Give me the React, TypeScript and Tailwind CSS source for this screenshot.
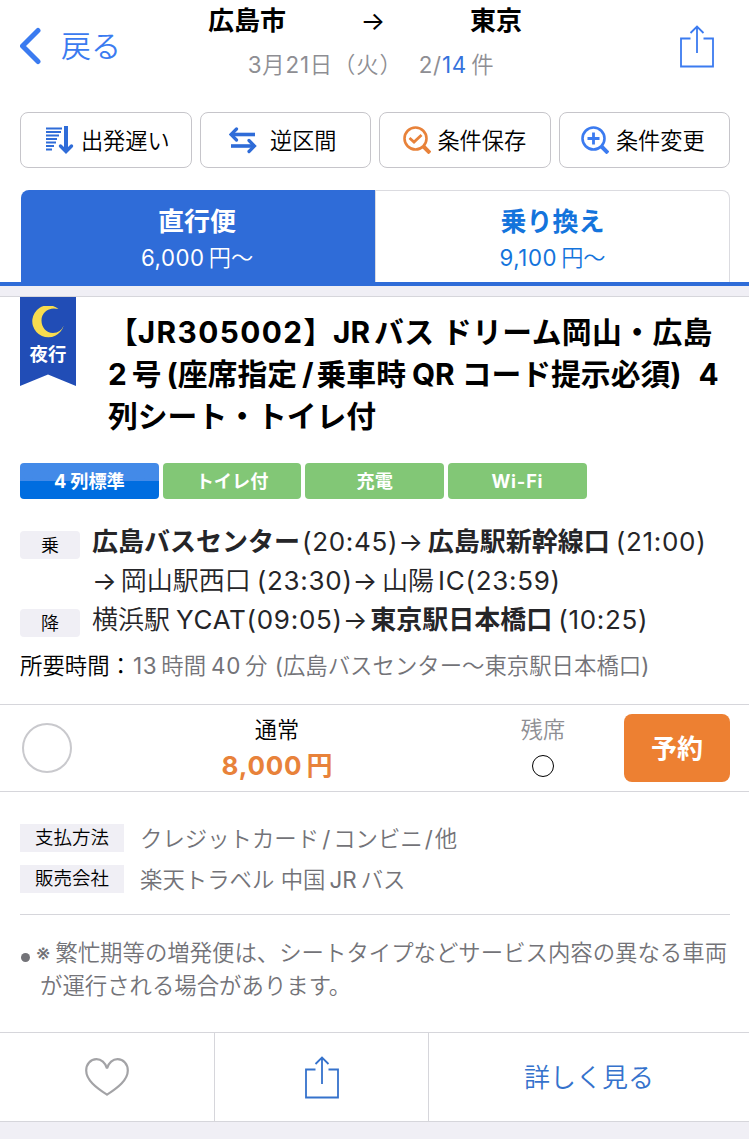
import type { ReactNode } from "react"

function ShareIcon({ className }: { className?: string }) {
  return (
    <svg width="36" height="43" viewBox="0 0 36 43" fill="none" stroke="currentColor" strokeWidth="1.8" className={className}>
      <path d="M11.5 13.5H2v28h32v-28h-9.5" />
      <path d="M18 28V2M11.5 8 18 1.5 24.5 8" />
    </svg>
  )
}

function SortIcon() {
  return (
    <svg width="29" height="28" viewBox="0 0 29 28" fill="none" stroke="#2f6cd8">
      <path strokeWidth="1.8" d="M1 2.500h16M1 6h15M1 9.500h13M1 13h11M1 16.500h10M1 20h8M1 23.500h6" />
      <path strokeWidth="4" d="M21 0v25" />
      <path strokeWidth="3.4" strokeLinecap="round" d="m15.500 20 5.500 5.500L26.500 20" />
    </svg>
  )
}

function SwapIcon() {
  return (
    <svg width="28" height="28" viewBox="0 0 28 28" fill="none" stroke="#2f6cd8" strokeWidth="3.6">
      <path d="M2 8.500h24" />
      <path strokeWidth="3.2" strokeLinecap="round" d="m7.500 3-5.500 5.500 5.500 5.500" />
      <path d="M2 20h24" />
      <path strokeWidth="3.2" strokeLinecap="round" d="M20 14.500 25.500 20 20 25.500" />
    </svg>
  )
}

function SearchIcon({ color, children }: { color: string; children: ReactNode }) {
  return (
    <svg width="28" height="28" viewBox="0 0 28 28" fill="none" stroke={color}>
      <circle cx="12.5" cy="12.5" r="11" strokeWidth="2.6" />
      <path strokeWidth="4" d="m20 20 7 7" />
      {children}
    </svg>
  )
}

function FilterButton({ icon, label, className }: { icon: ReactNode; label: string; className: string }) {
  return (
    <button className={`flex h-14 items-center justify-center rounded-lg border border-[#c6c5ca] bg-white text-[22.2px] text-black ${className}`}>
      {icon}
      <span className="mt-0.5 leading-none">{label}</span>
    </button>
  )
}

function Badge({ children, className }: { children: ReactNode; className: string }) {
  return (
    <span className={`flex h-9 w-[138.7px] items-center justify-center rounded pt-0.5 text-[18.2px] font-bold text-white ${className}`}>
      {children}
    </span>
  )
}

function Price({ amount }: { amount: string }) {
  return (
    <span className="mt-0.5 text-[22.2px] leading-8">
      <span className="tracking-[0.6px]">{amount}</span>
      <span className="ml-1">円〜</span>
    </span>
  )
}

function InfoRow({ label, children }: { label: string; children: ReactNode }) {
  return (
    <div className="flex h-7 items-center">
      <span className="flex h-7 w-[104px] items-center justify-center bg-[#f0eff5] text-[18.5px] text-black">{label}</span>
      <span className="ml-4 mt-0.5 whitespace-nowrap text-[22.4px] text-[#737378]">{children}</span>
    </div>
  )
}

function StopLabel({ children }: { children: ReactNode }) {
  return (
    <span className="mt-[9px] flex h-7 w-[60px] items-center justify-center rounded bg-[#f0eff5] text-[18px] text-black">
      {children}
    </span>
  )
}

function Time({ children }: { children: ReactNode }) {
  return <span className="tracking-[0.7px]">{children}</span>
}

export default function App() {
  return (
    <div
      lang="ja"
      className="flex h-[1139px] w-[749px] flex-col overflow-hidden bg-white font-['Inter','Noto_Sans_CJK_JP_DemiLight','Noto_Sans_CJK_JP',sans-serif] text-[#252528] [&_.font-bold]:font-['Inter','Noto_Sans_CJK_JP',sans-serif]"
    >
      {/* Header */}
      <header className="flex h-28 shrink-0 pl-5 pr-[34px]">
        <a href="#" className="mt-[26px] flex h-10 w-[188px] items-center text-[#3b7bf0]">
          <svg width="22" height="38" viewBox="0 0 22 38" fill="none" stroke="currentColor" strokeWidth="5" strokeLinecap="round" strokeLinejoin="round">
            <path d="M18 3.500 2.500 19 18 34.500" />
          </svg>
          <span className="ml-[19px] text-[30px] leading-10">戻る</span>
        </a>
        <div className="flex flex-col items-center">
          <div className="flex h-[41px] w-[314px] items-center justify-between text-[26px] text-black">
            <span className="font-bold">広島市</span>
            <span className="-ml-2.5">→</span>
            <span className="font-bold">東京</span>
          </div>
          <div className="ml-3 mt-1 flex h-10 items-center whitespace-nowrap text-[22.4px] tracking-[0.8px] text-[#8e8e93]">
            3月21日（火）
            <span className="ml-4">2/</span>
            <span className="text-[#3572dc]">14</span>
            <span className="ml-1">件</span>
          </div>
        </div>
        <a href="#" className="ml-auto mt-[25px] text-[#3b7bf0]">
          <ShareIcon />
        </a>
      </header>

      {/* Filter buttons */}
      <div className="grid h-14 shrink-0 grid-cols-4 gap-2 pl-5 pr-[19px]">
        <FilterButton icon={<SortIcon />} label="出発遅い" className="gap-[7px] pl-[3px]" />
        <FilterButton icon={<SwapIcon />} label="逆区間" className="gap-[13px] pr-[5px]" />
        <FilterButton
          icon={
            <SearchIcon color="#e8823a">
              <path strokeWidth="2.8" d="m6.500 12 4.500 4 7.500-7" />
            </SearchIcon>
          }
          label="条件保存"
          className="gap-1.5"
        />
        <FilterButton
          icon={
            <SearchIcon color="#3b7bf0">
              <path strokeWidth="2.8" d="M12.500 6.500v12M6.500 12.500h12" />
            </SearchIcon>
          }
          label="条件変更"
          className="gap-[7px] pr-[3px]"
        />
      </div>

      {/* Tabs */}
      <div className="mt-[22px] flex h-24 shrink-0 border-b-4 border-[#2f6cd8] pl-[21px] pr-[19px]">
        <button className="flex w-[354px] flex-col items-center rounded-tl-lg bg-[#2f6cd8] pr-0.5 pt-[13px] text-white">
          <span className="text-[26px] font-bold leading-[37px]">直行便</span>
          <Price amount="6,000" />
        </button>
        <button className="flex flex-1 flex-col items-center rounded-tr-lg border border-b-0 border-[#dbdbe0] pt-3 text-[#1474dc]">
          <span className="text-[26px] font-bold leading-[37px]">乗り換え</span>
          <Price amount="9,100" />
        </button>
      </div>
      <div className="h-[11px] shrink-0 border-b border-[#d6d6db] bg-[#f0eff5]" />

      {/* Bus title */}
      <section className="flex h-[166px] shrink-0 px-5">
        <div className="flex h-[89px] w-14 flex-col items-center bg-[#214db6] pt-[9px] text-white [clip-path:polygon(0_0,100%_0,100%_100%,50%_87%,0_100%)]">
          <svg width="32" height="32" viewBox="0 0 32 32" fill="#f8dc4f">
            <path d="M26.500 3A16 16 0 1 0 31.700 19.500 12 12 0 0 1 21 27C14 27 9.500 21 9.500 14.500 9.500 6 17 0.500 26.500 3Z" />
          </svg>
          <span className="mt-[3px] text-[18.4px] font-bold leading-[26px]">夜行</span>
        </div>
        <h1 className="ml-8 whitespace-nowrap pt-[14px] text-[29.8px] font-bold leading-[42px] text-black">
          <div>
            【<span className="tracking-[1.4px]">JR305002</span>】<span>JR</span>
            <span className="ml-1 tracking-[0.4px]">バス ドリーム岡山・広島</span>
          </div>
          <div>
            2<span className="mx-[5px]">号</span>(座席指定<span className="ml-[5px] mr-[3px]">/</span>乗車時
            <span className="ml-1.5 mr-[7px]">QR</span>
            コード提示必須)<span className="ml-[17px]">4</span>
          </div>
          <div>列シート・トイレ付</div>
        </h1>
      </section>

      {/* Facilities */}
      <div className="flex shrink-0 gap-1 pl-5">
        <Badge className="bg-linear-to-b from-[#438ae8] from-50% to-[#006de0] to-50%">
          <span className="mr-1">4</span>列標準
        </Badge>
        <Badge className="bg-[#82c776]">トイレ付</Badge>
        <Badge className="bg-[#82c776]">充電</Badge>
        <Badge className="bg-[#82c776] tracking-[0.8px]">Wi-Fi</Badge>
      </div>

      {/* Stops */}
      <section className="mt-[23px] flex h-[182px] shrink-0 flex-col whitespace-nowrap pl-5 text-[26px] leading-[39px]">
        <div className="flex">
          <StopLabel>乗</StopLabel>
          <div className="ml-3">
            <div>
              <b className="mr-0.5 font-bold">広島バスセンター</b>
              <Time>(20:45)→</Time>
              <b className="ml-1 mr-1.5 font-bold">広島駅新幹線口</b>
              <Time>(21:00)</Time>
            </div>
            <div>
              →<span className="ml-1 mr-1.5">岡山駅西口</span>
              <Time>(23:30)→</Time>
              <span className="mx-1">山陽</span>
              <Time>IC(23:59)</Time>
            </div>
          </div>
        </div>
        <div className="flex">
          <StopLabel>降</StopLabel>
          <div className="ml-3">
            <span className="mr-1.5">横浜駅</span>
            <Time>YCAT(09:05)→</Time>
            <b className="ml-0.5 mr-1.5 font-bold">東京駅日本橋口</b>
            <Time>(10:25)</Time>
          </div>
        </div>
        <p className="mt-[7px] text-[22.4px] text-[#737378]">
          <span className="mr-px text-black">所要時間：</span>
          <Time>13</Time>
          <span className="ml-1 mr-[5px]">時間</span>
          <Time>40</Time>
          <span className="ml-1 mr-px">分</span> (広島バスセンター〜東京駅日本橋口)
        </p>
      </section>

      {/* Fare */}
      <section className="flex h-[88px] shrink-0 items-center border-y border-[#d6d6db] pl-[22px] pr-[19px]">
        <span className="size-[50px] rounded-full border-2 border-[#c9c9cd]" />
        <div className="ml-[105px] flex w-[200px] flex-col items-center pt-[3px]">
          <span className="text-[22.2px] leading-8 text-black">通常</span>
          <span className="text-[26px] font-bold leading-10 text-[#e8823a]">
            <span className="tracking-[0.8px]">8,000</span>
            <span className="ml-1">円</span>
          </span>
        </div>
        <div className="ml-[116px] flex w-[100px] flex-col items-center pt-[3px]">
          <span className="text-[22.2px] leading-8 text-[#8e8e93]">残席</span>
          <span className="my-[9px] size-[22px] rounded-full border border-black" />
        </div>
        <button className="ml-auto h-[68px] w-[106px] rounded-lg bg-[#ed8032] text-[26px] font-bold text-white">予約</button>
      </section>

      {/* Payment and seller */}
      <section className="ml-5 mr-[19px] flex h-[123px] shrink-0 flex-col gap-[13px] border-b border-[#d6d6db] pt-8">
        <InfoRow label="支払方法">
          クレジットカード<span className="mx-[3px]">/</span>コンビニ<span className="mx-0.5">/</span>他
        </InfoRow>
        <InfoRow label="販売会社">
          楽天トラベル 中国<span className="mx-1">JR</span>バス
        </InfoRow>
      </section>

      <section className="flex h-[117px] shrink-0 whitespace-nowrap pl-[21px] pt-[21px] text-[22.4px] leading-[33px] text-[#737378]">
        <span className="mt-[17px] size-[9px] rounded-full bg-[#737378]" />
        <p className="ml-[6px]">
          <span className="mr-[5px]">※</span>繁忙期等の増発便は、シートタイプなどサービス内容の異なる車両
          <br />
          <span className="ml-1">が運行される場合があります。</span>
        </p>
      </section>

      {/* Card actions */}
      <footer className="flex h-[90px] shrink-0 border-y border-[#d6d6db]">
        <button className="flex w-[215px] items-center justify-center border-r border-[#d6d6db]">
          <svg width="44" height="38" viewBox="0 0 44 38" fill="none" stroke="#a3a3a6" strokeWidth="2.2">
            <path d="M22 10.500C20.500 4.500 16 1.200 11.500 1.200 5.500 1.200 1.200 6 1.200 12.500 1.200 22 11 29.500 22 36.700 33 29.500 42.800 22 42.800 12.500 42.800 6 38.500 1.200 32.500 1.200 28 1.200 23.500 4.500 22 10.500Z" />
          </svg>
        </button>
        <button className="flex w-[214px] items-center justify-center border-r border-[#d6d6db] text-[#3572cc]">
          <ShareIcon />
        </button>
        <button className="flex-1 text-[26px] text-[#3572cc]">詳しく見る</button>
      </footer>
      <div className="flex-1 bg-[#f0eff5]" />
    </div>
  )
}
